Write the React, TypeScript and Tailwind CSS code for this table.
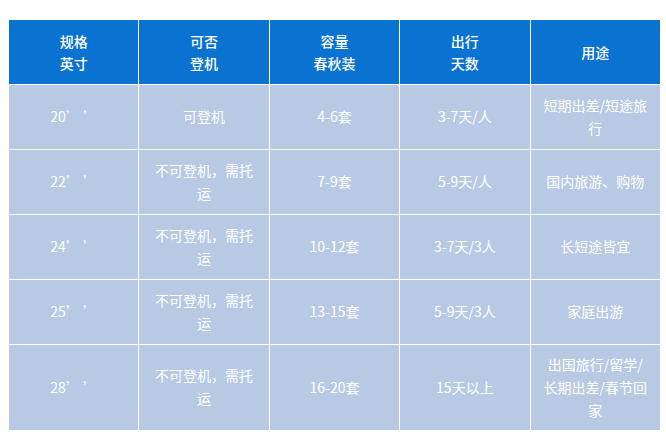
const HEAD = [
  ["规格", "英寸"],
  ["可否", "登机"],
  ["容量", "春秋装"],
  ["出行", "天数"],
  ["用途"],
];

const ROWS = [
  { h: "h-[65px]", cells: ["20’ ’", "可登机", "4-6套", "3-7天/人", "短期出差/短途旅行"] },
  { h: "h-[65px]", cells: ["22’ ’", "不可登机，需托运", "7-9套", "5-9天/人", "国内旅游、购物"] },
  { h: "h-[65px]", cells: ["24’ ’", "不可登机，需托运", "10-12套", "3-7天/3人", "长短途皆宜"] },
  { h: "h-[65px]", cells: ["25’ ’", "不可登机，需托运", "13-15套", "5-9天/3人", "家庭出游"] },
  { h: "h-[86px]", cells: ["28’ ’", "不可登机，需托运", "16-20套", "15天以上", "出国旅行/留学/长期出差/春节回家"] },
];

export default function App() {
  return (
    <div
      className="w-[666px] h-[436px] bg-white pt-[20px] pl-[8px]"
      style={{ fontFamily: '"Noto Sans CJK SC", "Liberation Sans", sans-serif' }}
    >
      <table className="w-[653px] table-fixed border-collapse text-[14px] text-white text-center">
        <thead>
          <tr className="h-[64px] bg-[#0a72d1]">
            {HEAD.map((lines, i) => (
              <th key={i} className="border border-white border-t-0 px-[12px] font-medium leading-[22px] align-middle">
                {lines.map((l) => (
                  <div key={l}>{l}</div>
                ))}
              </th>
            ))}
          </tr>
        </thead>
        <tbody>
          {ROWS.map((row, r) => (
            <tr key={r} className={`${row.h} bg-[#b8c9e3]`}>
              {row.cells.map((c, i) => (
                <td key={i} className="border border-white px-[12px] leading-[23px] align-middle">
                  {c}
                </td>
              ))}
            </tr>
          ))}
        </tbody>
      </table>
    </div>
  );
}
